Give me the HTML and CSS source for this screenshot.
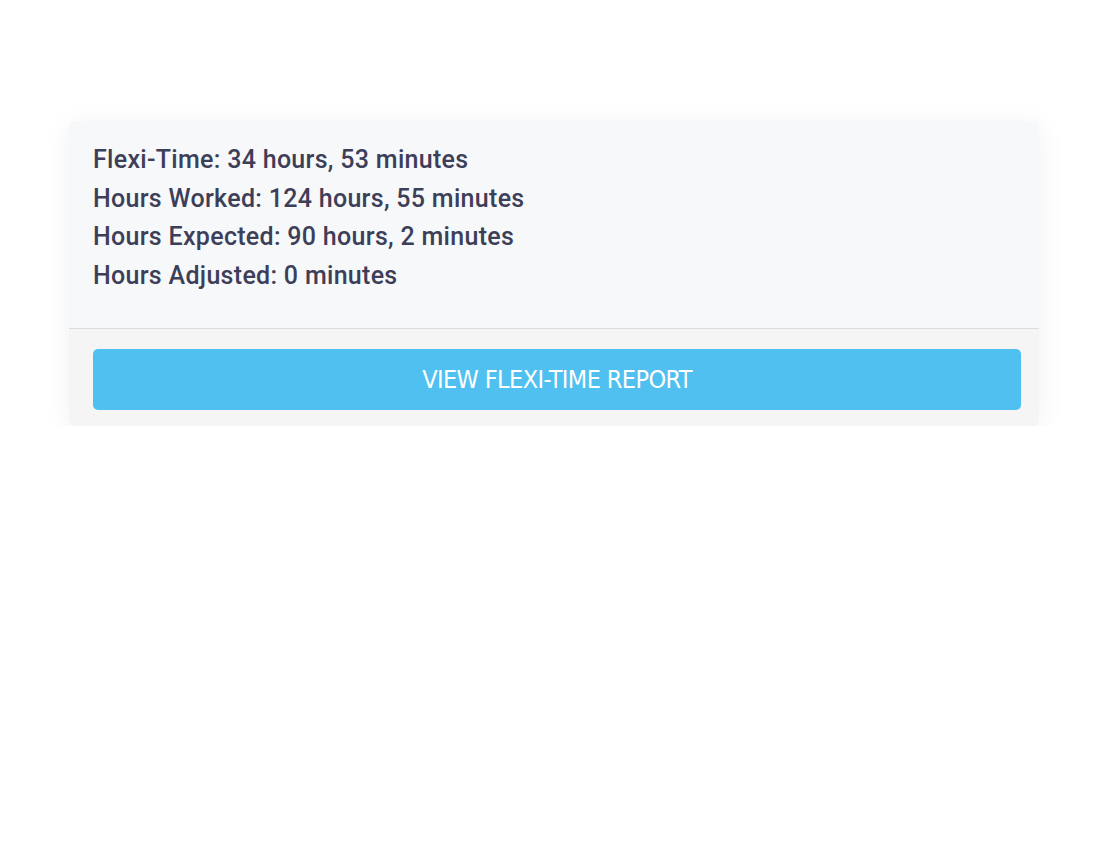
FILE: index.html
```html
<!DOCTYPE html>
<html lang="en">
<head>
  <meta charset="UTF-8" />
  <meta name="viewport" content="width=device-width, initial-scale=1.0"/>
  <title>Flexi-Time</title>
  <link rel="stylesheet" href="styles.css">
</head>
<body>
  <div class="card">
    <div class="card-body">
      <p>Flexi-Time: 34 hours, 53 minutes</p>
      <p>Hours Worked: 124 hours, 55 minutes</p>
      <p>Hours Expected: 90 hours, 2 minutes</p>
      <p>Hours Adjusted: 0 minutes</p>
    </div>
    <div class="card-footer">
      <button type="button">View Flexi-Time Report</button>
    </div>
  </div>
</body>
</html>
```

FILE: styles.css
```css
body {
  margin: 0;
  background: #fff;
  font-family: Roboto, "Liberation Sans", sans-serif;
}
.card {
  width: 970px;
  margin: 121px 0 0 69px;
  border-radius: 6px;
  overflow: hidden;
  box-shadow: 0 4px 30px rgba(0, 0, 0, 0.06);
}
.card-body {
  background: #f7f8fa;
  padding: 20px 24px 33px;
  border-bottom: 1px solid #dcdcdf;
}
.card-body p {
  margin: 0;
  font-size: 25px;
  font-weight: 500;
  letter-spacing: 0.3px;
  line-height: 38.5px;
  color: #3d3f58;
}
.card-footer {
  background: #f5f5f6;
  padding: 20px 18px 16px 24px;
}
button {
  display: block;
  width: 100%;
  height: 61px;
  border: 0;
  border-radius: 5px;
  background: #50c0f0;
  color: #fff;
  font-family: "Liberation Sans Narrow", "DejaVu Sans Condensed", sans-serif;
  font-size: 25px;
  letter-spacing: -0.6px;
  text-transform: uppercase;
  cursor: pointer;
}
```
